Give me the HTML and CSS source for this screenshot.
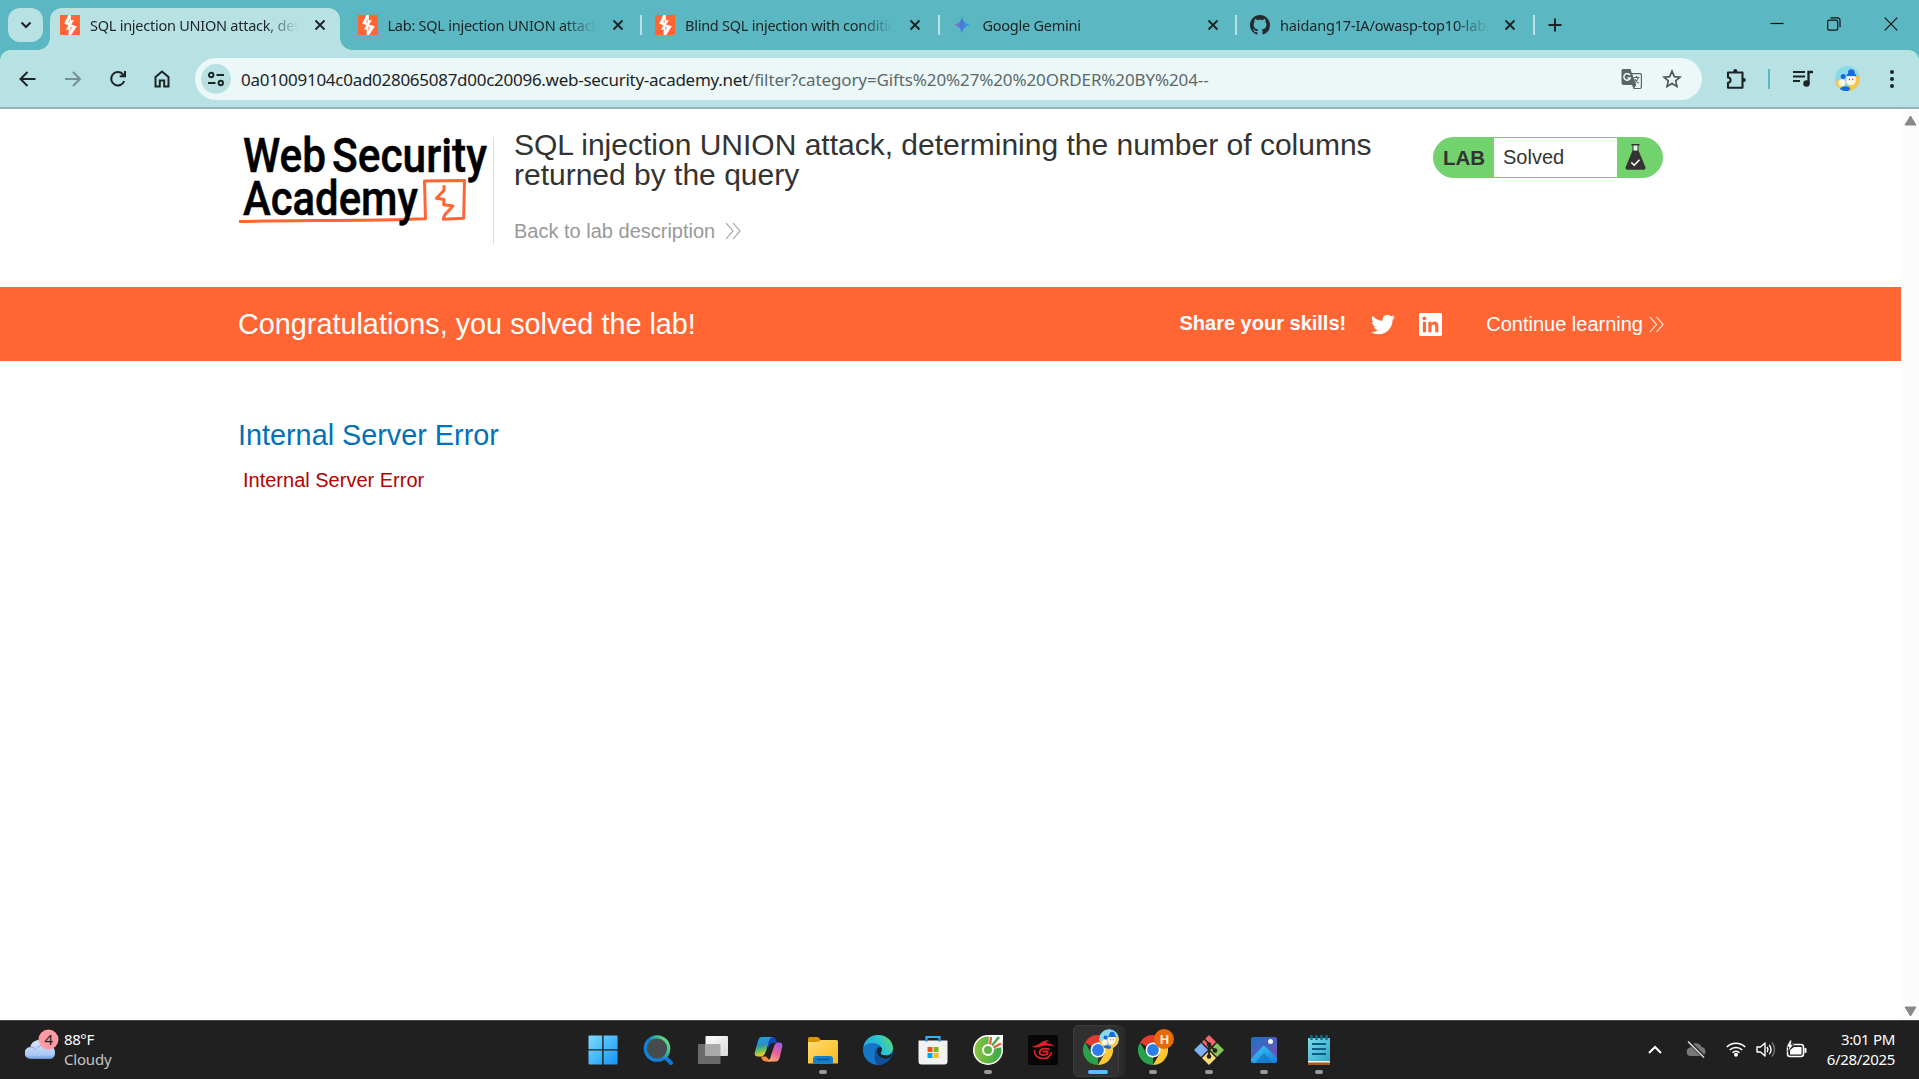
FILE: index.html
```html
<!DOCTYPE html>
<html lang="en">
<head>
<meta charset="utf-8">
<title>SQL injection UNION attack, determining the number of columns</title>
<link rel="stylesheet" href="styles.css">
</head>
<body>
<svg class="defs" aria-hidden="true">
  <defs>
    <symbol id="burp" viewBox="0 0 20 20"><path fill="#ff6633" d="M0 0h20v20H0z"/><path fill="#fff" d="M10.800 0v5.200h3.100L11 9.500l5.800 1.800L11.200 20H8.700v-5.600H5.800l2.700-4.200-4.300-1.500L8.300 0z"/><path fill="#ff6633" d="M7.800 7.200 10 3.500v4.400zM12.500 12.300 10 16.200v-4.600z" opacity=".5"/></symbol>
    <symbol id="x" viewBox="0 0 12 12"><path d="M1.500 1.500l9 9M10.500 1.500l-9 9" fill="none" stroke="#1c2426" stroke-width="1.900"/></symbol>
    <symbol id="chev" viewBox="0 0 16 18"><path d="M1 1l7 8-7 8M8 1l7 8-7 8" fill="none" stroke="currentColor" stroke-width="1.100"/></symbol>
    <symbol id="chrome" viewBox="0 0 30 30"><path fill="#e33b2e" d="M15 15 2 7.500A15 15 0 0 1 28 7.500z"/><path fill="#2aa14c" d="M15 15v15A15 15 0 0 1 2 7.500l6.500 11.200z"/><path fill="#fcc934" d="M15 7.500h13A15 15 0 0 1 15 30l6.500-11.200z"/><circle cx="15" cy="15" r="7.500" fill="#fff"/><circle cx="15" cy="15" r="5.900" fill="#2b7de9"/></symbol>
    <symbol id="avatar" viewBox="0 0 26 26"><circle cx="13" cy="13" r="13" fill="#8adbea"/><path fill="#f7c548" d="M.5 16 6 14l4 8 7-3 5-9 3.700.5C27 19 21 26 13 26 6 26 1 21 .5 16z"/><path fill="#fff6df" d="M12 12c1-4 9-4 9.500 0s-.5 8-5 8-5.500-4-4.500-8zM4 16c1-3 6-3 6.500 0s-.5 5-3.500 5-4-2-3-5z"/><circle cx="17" cy="7" r="3.500" fill="#1769e0"/><path fill="#1769e0" d="M12 8.500h10v2H12z"/><circle cx="8.500" cy="11" r="2.600" fill="#1769e0"/><path fill="#1769e0" d="M5 24c2-3.500 9-4 11-.5L14 26H9z"/><circle cx="15" cy="14" r=".7" fill="#553"/><circle cx="18.500" cy="14" r=".7" fill="#553"/></symbol>
  </defs>
</svg>

<header class="tabstrip">
  <button class="tabsearch"><svg width="12" height="8" viewBox="0 0 12 8"><path d="M1.500 1.500 6 6l4.500-4.500" fill="none" stroke="#1c2426" stroke-width="2.100"/></svg></button>
  <div class="tab active"><svg class="fav"><use href="#burp"/></svg><span class="label">SQL injection UNION attack, determining</span><svg class="close"><use href="#x"/></svg></div>
  <div class="tab"><svg class="fav"><use href="#burp"/></svg><span class="label">Lab: SQL injection UNION attack, determ</span><svg class="close"><use href="#x"/></svg></div>
  <div class="tab"><svg class="fav"><use href="#burp"/></svg><span class="label">Blind SQL injection with conditional resp</span><svg class="close"><use href="#x"/></svg></div>
  <div class="tab"><svg class="fav" viewBox="0 0 20 20"><defs><linearGradient id="gem"><stop offset="0" stop-color="#b56fc0"/><stop offset=".45" stop-color="#4a78d8"/><stop offset="1" stop-color="#22a5e8"/></linearGradient></defs><path fill="url(#gem)" d="M9 1c.7 5.500 3.500 8.300 9 9-5.500.7-8.300 3.500-9 9-.7-5.500-3.500-8.300-9-9 5.500-.7 8.300-3.500 9-9z"/></svg><span class="label">Google Gemini</span><svg class="close"><use href="#x"/></svg></div>
  <div class="tab"><svg class="fav" viewBox="0 0 16 16"><path fill="#24292f" d="M8 0C3.580 0 0 3.580 0 8c0 3.540 2.290 6.530 5.470 7.590.4.070.55-.17.55-.38 0-.19-.01-.82-.01-1.490-2.010.37-2.530-.49-2.690-.94-.09-.23-.48-.94-.82-1.130-.28-.15-.68-.52-.01-.53.63-.01 1.080.58 1.230.82.72 1.210 1.870.87 2.330.66.070-.52.280-.87.510-1.070-1.780-.2-3.640-.89-3.640-3.950 0-.87.310-1.590.820-2.150-.08-.2-.36-1.020.080-2.120 0 0 .67-.21 2.200.82.640-.18 1.320-.27 2-.27s1.360.09 2 .27c1.530-1.040 2.200-.82 2.200-.82.440 1.100.160 1.920.080 2.120.510.56.820 1.270.820 2.150 0 3.070-1.870 3.750-3.650 3.950.290.250.540.730.540 1.480 0 1.070-.01 1.930-.01 2.200 0 .21.150.46.550.38A8.010 8.010 0 0 0 16 8c0-4.420-3.580-8-8-8z"/></svg><span class="label tight">haidang17-IA/owasp-top10-labs: OWA</span><svg class="close"><use href="#x"/></svg></div>
  <svg class="newtab" viewBox="0 0 14 14"><path d="M7 .5v13M.5 7h13" stroke="#1c2426" stroke-width="2"/></svg>
  <div class="winctl">
    <svg width="14" height="14"><path d="M.5 6.500h13" stroke="#111" stroke-width="1.200"/></svg>
    <svg width="14" height="14" fill="none" stroke="#111" stroke-width="1.200"><rect x=".7" y="3.200" width="10" height="10" rx="1.500"/><path d="M3.500.8h7a2.500 2.500 0 0 1 2.500 2.500v7"/></svg>
    <svg width="14" height="14"><path d="M.7.7l12.600 12.600M13.300.7.7 13.300" stroke="#111" stroke-width="1.200"/></svg>
  </div>
</header>

<nav class="toolbar">
  <div class="navbtns">
    <svg viewBox="0 0 20 20"><path d="M17.500 10H3M9.500 3 2.500 10l7 7" class="ln"/></svg>
    <svg viewBox="0 0 20 20" opacity=".42"><path d="M2 10h14.500M10 3l7 7-7 7" class="ln"/></svg>
    <svg viewBox="0 0 20 20"><path d="M16.200 12a6.700 6.700 0 1 1-1.400-6.800l1.700 1.700M17 2v5.300h-5.300" class="ln"/></svg>
    <svg viewBox="0 0 20 20"><path d="M3.500 8 10 2.500 16.500 8v9.500h-4.300v-6H7.800v6H3.500z" class="ln"/></svg>
  </div>
  <div class="omnibox">
    <span class="site"><svg width="18" height="16" viewBox="0 0 18 16" fill="none" stroke="#1c2426" stroke-width="1.900"><circle cx="4.200" cy="4" r="2.200"/><path d="M9.500 4H17M1 12h7.500"/><circle cx="13.800" cy="12" r="2.200"/></svg></span>
    <span class="url"><b>0a01009104c0ad028065087d00c20096.web-security-academy.net</b><i>/filter?category=Gifts%20%27%20%20ORDER%20BY%204--</i></span>
    <svg class="translate" viewBox="0 0 22 22"><path fill="#5a6466" d="M2 1h7.500l1.300 4H19a2 2 0 0 1 2 2v12a2 2 0 0 1-2 2h-6.500L11 17H2.500a2 2 0 0 1-2-2V2.500A1.500 1.500 0 0 1 2 1z"/><path fill="#ecf8f8" d="M11.300 6.300H19a.8.8 0 0 1 .8.800v12a.8.8 0 0 1-.8.800h-5.700l2-2.900z"/><path d="M9 7.200A3.300 3.300 0 1 0 9.300 10H6.500" fill="none" stroke="#ecf8f8" stroke-width="1.500"/><path d="M12.500 9.500h6M15.500 8v1.500M17.300 9.500c-.5 2.500-2 4-3.600 5M13.700 11c.8 1.800 2.200 3.300 4 4.200" fill="none" stroke="#5a6466" stroke-width="1.200"/></svg>
    <svg class="star" viewBox="0 0 20 20"><path d="M10 2.200l2.300 5.400 5.700.5-4.300 3.800 1.300 5.700-5-3-5 3 1.300-5.700L2 8.100l5.700-.5z" fill="none" stroke="#4f595b" stroke-width="1.700"/></svg>
  </div>
  <div class="actions">
    <svg class="ext" width="24" height="24" viewBox="0 0 24 24"><path d="M3 5.500h14.500v15.200H3v-5a2.600 2.600 0 0 0 0-5.200z" fill="none" stroke="#1c2426" stroke-width="2.100" stroke-linejoin="round"/><path d="M8.300 5V4a2 2 0 0 1 4 0v1zM18 11h.8a2 2 0 0 1 0 4H18z" fill="#1c2426"/></svg>
    <span class="sep"></span>
    <svg class="media" width="22" height="18" viewBox="0 0 22 18"><path d="M1 2h12M1 6.500h12M1 11h7" stroke="#1c2426" stroke-width="2.100"/><path d="M16.500 13.500V2H21" fill="none" stroke="#1c2426" stroke-width="2.300"/><circle cx="14.500" cy="13.500" r="3.200" fill="#1c2426"/></svg>
    <svg class="me" width="25" height="25"><use href="#avatar"/></svg>
    <svg width="4" height="18" fill="#1c2426"><circle cx="2" cy="2" r="2"/><circle cx="2" cy="9" r="2"/><circle cx="2" cy="16" r="2"/></svg>
  </div>
</nav>

<div class="viewport">
  <main class="page">
    <section class="labhead">
      <svg class="logo" viewBox="0 0 255 95">
        <path d="M1 90.500c60-1.300 125-.5 186.500-2.800L186.500 50l40-.5-.8 37.800-20.500.9 1.500-4.200 8.200-9-9.200-1.200.3-5.300-7.500-1.200 7.500-8v-5" class="mark"/>
        <g class="logotext"><text x="5" y="41" textLength="83" lengthAdjust="spacingAndGlyphs">Web</text><text x="94" y="41" textLength="155" lengthAdjust="spacingAndGlyphs">Security</text><text x="5" y="84" textLength="175" lengthAdjust="spacingAndGlyphs">Academy</text></g>
      </svg>
      <div class="titles">
        <h2>SQL injection UNION attack, determining the number of columns returned by the query</h2>
        <a class="back"><span>Back to lab description</span><svg width="16" height="18"><use href="#chev"/></svg></a>
      </div>
      <div class="badge"><b>LAB</b><span>Solved</span><svg width="22" height="27" viewBox="0 0 22 27"><path fill="#333332" d="M6.500 0h8v1.500h-1v5l6.800 16.300c.7 1.700 0 2.900-1.700 2.900H2.500C.8 25.700.1 24.500.8 22.800L7.500 6.500v-5h-1z"/><path fill="#eef6ee" d="M8.500 1.500h4v5h-4z"/><path d="M6.300 18.500l2.900 2.700 5.300-5.400" fill="none" stroke="#fff" stroke-width="1.600"/></svg></div>
    </section>
    <section class="banner">
      <h4>Congratulations, you solved the lab!</h4>
      <b class="share">Share your skills!</b>
      <svg class="tw" viewBox="0 2 24 20"><path fill="#fff" d="M23.950 4.570a10 10 0 0 1-2.820.77 4.960 4.960 0 0 0 2.160-2.720c-.95.550-2 .95-3.130 1.180a4.920 4.920 0 0 0-8.380 4.480A13.900 13.900 0 0 1 1.640 3.160a4.920 4.920 0 0 0 1.520 6.570 4.900 4.900 0 0 1-2.230-.61v.06c0 2.380 1.700 4.370 3.950 4.820a5 5 0 0 1-2.210.090 4.940 4.940 0 0 0 4.600 3.420A9.870 9.870 0 0 1 0 19.540a14 14 0 0 0 7.550 2.210c9.050 0 14-7.500 14-13.980l-.02-.63a9.940 9.940 0 0 0 2.460-2.550z"/></svg>
      <svg class="li" viewBox="0 0 24 24"><rect width="24" height="24" rx="1.500" fill="#fff"/><path fill="#ff6633" d="M4 9.200h3.300V20H4zM9.800 9.200H13v1.500c1.700-2.800 7.200-2.400 7.200 2.600V20H17v-5.800c0-3.200-3.900-3-3.900 0V20H9.800z"/><circle cx="5.600" cy="5.600" r="2" fill="#ff6633"/></svg>
      <a class="cont"><span>Continue learning</span><svg width="15" height="17"><use href="#chev"/></svg></a>
    </section>
    <section class="error"><h4>Internal Server Error</h4><p>Internal Server Error</p></section>
  </main>
  <div class="scroll"><svg width="13" height="11"><path d="M6.500 1 12 10H1z" fill="#888" stroke="#888" stroke-linejoin="round"/></svg><svg width="13" height="11"><path d="M6.500 10 1 1h11z" fill="#888" stroke="#888" stroke-linejoin="round"/></svg></div>
</div>

<footer class="taskbar">
  <div class="weather">
    <svg width="36" height="36" viewBox="0 0 36 36"><defs><linearGradient id="cl" x2="0" y2="1"><stop stop-color="#dce9fb"/><stop offset=".8" stop-color="#a8c6f5"/><stop offset="1" stop-color="#6c94d8"/></linearGradient></defs><path fill="url(#cl)" d="M6 30a6 6 0 0 1-.8-12A9 9 0 0 1 21 14.500c6 0 9 5 9 9s-2 6.500-5 6.500z"/><path d="M5 18.500c3-.5 5 .5 6.500 2.500M12 19c4-4 9-4 13 1" stroke="#8eaee0" fill="none"/><circle cx="23.500" cy="10.500" r="10" fill="#ff99a4"/><text x="23.500" y="16" class="count">4</text></svg>
    <div class="wtext"><div class="deg">88°F</div><div class="cond">Cloudy</div></div>
  </div>
  <div class="apps">
    <span><svg viewBox="0 0 30 30"><defs><linearGradient id="wn" x2="1" y2="1"><stop stop-color="#7fdcff"/><stop offset="1" stop-color="#0f94f5"/></linearGradient></defs><path fill="url(#wn)" d="M.5 1.500a1 1 0 0 1 1-1h12.700v13.700H.5zM15.600.5h13a1 1 0 0 1 1 1v12.700h-14zM.5 15.500h13.700v14H1.500a1 1 0 0 1-1-1zM15.600 15.500h14v13a1 1 0 0 1-1 1h-13z"/></svg></span>
    <span><svg viewBox="0 0 30 30"><defs><linearGradient id="sr" x1="1" x2="0" y2=".7"><stop stop-color="#6df08a"/><stop offset=".35" stop-color="#41b88e"/><stop offset=".6" stop-color="#147fd2"/><stop offset="1" stop-color="#1183dc"/></linearGradient></defs><path d="M21 21l7 7" stroke="#0d78d4" stroke-width="4" stroke-linecap="round"/><circle cx="14" cy="13.500" r="11.700" fill="#474b4c" stroke="url(#sr)" stroke-width="3.200"/></svg></span>
    <span><svg viewBox="0 0 30 30"><defs><linearGradient id="tv" x2="1" y2="1"><stop stop-color="#fff"/><stop offset="1" stop-color="#d8d8d8"/></linearGradient></defs><rect y="9" width="22.500" height="20" rx="1" fill="#6a6a6a"/><rect x="7.500" y="1" width="22.500" height="20" rx="1" fill="url(#tv)"/><path fill="#aaa" d="M7.500 9h15v12h-15z"/></svg></span>
    <span><svg viewBox="0 0 30 30"><defs><linearGradient id="c1" x2=".2" y2="1"><stop stop-color="#1ba7ee"/><stop offset=".45" stop-color="#2b8ec2"/><stop offset=".7" stop-color="#63bb62"/><stop offset="1" stop-color="#f2cf25"/></linearGradient><linearGradient id="c2" x1=".8" x2=".3" y2="1"><stop stop-color="#a45be6"/><stop offset=".5" stop-color="#e75f9d"/><stop offset="1" stop-color="#ffaa68"/></linearGradient></defs><g transform="translate(1)"><path fill="#1545bd" d="M14 2h4c3 0 4 2 5 6h-4c-3 0-4 3-5 6z"/><path fill="url(#c1)" d="M8 2h11c-3 0-4 3-5 8l-2 6c-1 4-3 5.500-6 5.500H4c-3 0-4-2-3-5L4 6c1-3 2-4 4-4z"/><path fill="#f58a3c" d="M7 21.500h5l5 5H12c-3 0-4-2-5-5z"/><path fill="url(#c2)" d="M22 26.500H12c3 0 4-2 5-6l3-9c1-3 2-4 5-4 3 0 4 2 3 5l-2 9c-1 3.500-2 5-4 5z"/></g></svg></span>
    <span class="run"><svg viewBox="0 0 30 30"><path fill="#dc9400" d="M0 3.500A1.500 1.500 0 0 1 1.500 2H10l3.500 3.500V12H0z"/><defs><linearGradient id="fe" x2="1" y2="1"><stop stop-color="#ffdc78"/><stop offset="1" stop-color="#fcb813"/></linearGradient></defs><path fill="url(#fe)" d="M0 7h10l3-2h15.500A1.500 1.500 0 0 1 30 6.500v22H0z"/><path fill="#1180d0" d="M5 28.500V24a3 3 0 0 1 3-3h14a3 3 0 0 1 3 3v4.500z"/><path d="M9 24.500h12" stroke="#0b4e92" stroke-width="1.500"/></svg></span>
    <span><svg viewBox="0 0 30 30"><defs><linearGradient id="e1" y1=".4" x2="1"><stop stop-color="#2aa5e0"/><stop offset=".5" stop-color="#2cc3d3"/><stop offset="1" stop-color="#6be04c"/></linearGradient></defs><circle cx="15" cy="15" r="15" fill="#0c59a4"/><path fill="#1676c8" d="M0 14c1-6 6-7 11-6 3 1 5 2 6 4-4-1-6 3-5 7 1 5 4 8 9 9.500C10 33 0 25 0 14z"/><path fill="url(#e1)" d="M.3 12C2 4 8 0 15 0c9 0 15 6.500 15 13 0 5-4 7.500-7.500 7.500-3 0-5-1-5-2 0-.8 1.500-1.300 1.500-4C19 9 7 4.500.3 12z"/><path fill="#202020" d="M18.700 13c.5 2.800-1.200 4-1.200 5 0 1.200 2.200 2.500 5.500 2.500 2 0 3.500-.5 5-1.500l1 1c-2 4-6 4.500-9 3.500-4-1.200-6-4-6-7s2-5 4.700-3.500z"/><path fill="#0f4f98" d="M13.500 15c.3 4 3 7.300 7.500 8.500 3 .5 6-.5 7.500-2C26 27 20 30 15 30c-4-3-4-11-1.500-15z"/></svg></span>
    <span><svg viewBox="0 0 30 30"><path d="M8.500 7V2h13v5" fill="none" stroke="#2fb3f3" stroke-width="2.200"/><path fill="#f2f2f2" d="M.5 5.500h29v21a3 3 0 0 1-3 3h-23a3 3 0 0 1-3-3z"/><path d="M8.500 6.500V4M21.500 6.500V4" stroke="#1381c4" stroke-width="2.200"/><path fill="#f25022" d="M9.500 12h5v5h-5z"/><path fill="#7fba00" d="M15.500 12h5v5h-5z"/><path fill="#00a4ef" d="M9.500 18h5v5h-5z"/><path fill="#ffb900" d="M15.500 18h5v5h-5z"/></svg></span>
    <span class="run"><svg viewBox="0 0 30 30"><defs><linearGradient id="cc" x2="1"><stop stop-color="#8bc53f"/><stop offset="1" stop-color="#39a84a"/></linearGradient></defs><circle cx="15" cy="15" r="15" fill="#fff"/><path fill="#fff" d="M15 0h15l-1 15z"/><circle cx="15" cy="15" r="13.500" fill="url(#cc)"/><path fill="#fff" d="M15 15 16 0h14l-.5 12z"/><path d="M17 10 18 2M20.500 12.500l7.500-4" stroke="#f15a38" stroke-width="2.400"/><path d="M19 10.500 26 2" stroke="#45a849" stroke-width="2.400"/><circle cx="15" cy="15" r="6" fill="#fff"/><circle cx="15" cy="15" r="4" fill="#62b445"/></svg></span>
    <span><svg viewBox="0 0 30 30"><rect width="30" height="30" rx="2" fill="#070606"/><path fill="#e3202a" d="M3.500 11C8 12 10 9 14 7c2-1 4-2 7-2-2 1-3 2-2.500 3 3 .3 6 1.500 8.500 3.500-5-1-10-1.500-14 0C9 13 5 13 3.500 11z"/><path d="M22 14.500c-5-2-10-.5-10.500 2.500s4 4 8 2v-2.500h-5" fill="none" stroke="#e3202a" stroke-width="1.800"/><path d="M6.500 15c-.5 5 3 8.500 8.500 8.500 4.500 0 7.500-2.500 8.500-6.500" fill="none" stroke="#e3202a" stroke-width="1.500"/></svg></span>
    <span class="run current"><svg viewBox="0 0 30 30"><use href="#chrome"/></svg><svg class="pip"><use href="#avatar"/></svg></span>
    <span class="run"><svg viewBox="0 0 30 30"><use href="#chrome"/></svg><em class="pip">H</em></span>
    <span class="run"><svg viewBox="0 0 30 30"><path fill="#f0686c" d="m15 0 7 7-7 7-7-7z"/><path fill="#7fb0f6" d="m7 8 7 7-7 7-7-7z"/><path fill="#84c452" d="m23 8 7 7-7 7-7-7z"/><path fill="#fbdc7c" d="m15 16 7 7-7 7-7-7z"/><path d="m9.500 3 5.500 6v13M15 9.500l6 6" fill="none" stroke="#262020" stroke-width="1.800"/><circle cx="15" cy="9.500" r="2.300" fill="#262020"/><circle cx="21" cy="15.500" r="2.300" fill="#262020"/><circle cx="15" cy="21.500" r="2.300" fill="#262020"/></svg></span>
    <span class="run"><svg viewBox="0 0 30 30"><defs><linearGradient id="ph" x2=".7" y2="1"><stop stop-color="#1b72c8"/><stop offset="1" stop-color="#7652b6"/></linearGradient><linearGradient id="mt" x2="1" y2="1"><stop stop-color="#3cc8f6"/><stop offset="1" stop-color="#1280dc"/></linearGradient></defs><rect x="2" y="2" width="26" height="26" rx="2.500" fill="url(#ph)"/><path fill="url(#mt)" d="M2 24 13 12q2-2 4 0l11 11v2.500a2.500 2.500 0 0 1-2.500 2.500h-21A2.500 2.500 0 0 1 2 25.500z"/><path fill="#0d6cc9" d="m15 18 9 10H6z" opacity=".6"/><circle cx="21.500" cy="6.500" r="2.500" fill="#f2f4ff"/></svg></span>
    <span class="run"><svg viewBox="0 0 30 30"><defs><linearGradient id="np" x2="1" y2="1"><stop stop-color="#7fdcec"/><stop offset="1" stop-color="#2fa5c8"/></linearGradient></defs><path fill="#a95a16" d="M4 25h22v5H4z"/><path fill="#f3f3f3" d="M4 24h22v3.500H4z"/><path fill="url(#np)" d="M4 3h22v23H4z"/><path d="M8 9h14M8 14h14M8 19h14" stroke="#0b5f80" stroke-width="1.800"/><path d="M7.500 1v3M12.500 1v3M17.500 1v3M22.500 1v3" stroke="#0d6d8c" stroke-width="2.600" stroke-linecap="round"/></svg></span>
  </div>
  <div class="tray">
    <svg width="14" height="9"><path d="M1 8l6-6 6 6" fill="none" stroke="#fff" stroke-width="2"/></svg>
    <svg width="20" height="17" viewBox="0 0 20 17"><path fill="#777" d="M4.500 15a4.300 4.300 0 0 1-.3-8.500A6 6 0 0 1 15.500 6 4.600 4.600 0 0 1 16 15z"/><path d="M2.500.5l16 16" stroke="#222" stroke-width="3.500"/><path d="M2 .5l16 16" stroke="#ddd" stroke-width="1.500"/></svg>
    <svg width="20" height="16" viewBox="0 0 20 16" fill="none" stroke="#fff" stroke-width="1.600"><path d="M.8 6a13 13 0 0 1 18.400 0M3.700 9a9 9 0 0 1 12.600 0M6.500 11.800a5 5 0 0 1 7 0"/><circle cx="10" cy="13.800" r="1.200" fill="#fff"/></svg>
    <svg width="20" height="17" viewBox="0 0 20 17" fill="none" stroke="#fff" stroke-width="1.400"><path d="M1 6h3.500L9 2v13l-4.500-4H1z" stroke-linejoin="round"/><path d="M11 6q1.800 2.500 0 5M13.300 3.800q3.400 4.700 0 9.400"/><path d="M16 1.500q5 7 0 14" stroke="#777"/></svg>
    <svg width="21" height="18" viewBox="0 0 21 18"><rect x="1.500" y="4.500" width="16" height="12" rx="2.500" fill="none" stroke="#fff" stroke-width="1.500"/><path fill="#fff" d="M4 10l4-3h7.500v7.500H4zM18.500 8h1a1 1 0 0 1 1 1v3a1 1 0 0 1-1 1h-1z"/><path fill="#fff" stroke="#202020" stroke-width=".8" d="M4 0 .3 7H3l-1 5 5.500-7.500H5L6 0z"/></svg>
    <div class="clock"><div class="time">3:01 PM</div><div class="date">6/28/2025</div></div>
  </div>
</footer>
</body>
</html>
```
FILE: styles.css
```css
* { box-sizing: border-box; }
body {
  margin: 0;
  width: 1919px;
  height: 1079px;
  display: flex;
  flex-direction: column;
  overflow: hidden;
  background: #fff;
  font-family: "Liberation Sans", Arial, sans-serif;
}
svg { display: block; flex: none; }
h2, h4, p { margin: 0; font-weight: 400; }
.defs { position: absolute; width: 0; height: 0; }

/* Tab strip */
.tabstrip {
  height: 50px;
  flex: none;
  display: flex;
  background: #5bb7c1;
  padding: 8px 0 0 8px;
  font-family: "Noto Sans", sans-serif;
  font-size: 14.5px;
  letter-spacing: -0.25px;
  color: #1c2426;
}
.tabsearch {
  width: 35px;
  height: 34px;
  padding: 0;
  border: 0;
  border-radius: 12px;
  background: #b8e1e4;
  display: grid;
  place-items: center;
  margin-right: 7px;
}
.tab {
  width: 297.5px;
  height: 42px;
  display: flex;
  align-items: center;
  padding: 0 15px 8px 10px;
  position: relative;
}
.fav { width: 20px; height: 20px; }
.label {
  width: 210px;
  margin: 0 14px 0 10px;
  overflow: hidden;
  white-space: nowrap;
  mask-image: linear-gradient(90deg, #000 175px, transparent 208px);
}
.label.tight { letter-spacing: -0.15px; }
.close { width: 12px; height: 12px; }
.tab:not(.active)::after {
  content: "";
  position: absolute;
  right: 3px;
  top: 7px;
  width: 2px;
  height: 20px;
  background: #b8e1e4;
}
.tab.active::before {
  content: "";
  position: absolute;
  inset: 0 8px 0 0;
  border-radius: 12px 12px 0 0;
  background: #b8e1e4;
}
.tab.active::after {
  content: "";
  position: absolute;
  left: -12px;
  right: -4px;
  bottom: 0;
  height: 12px;
  background:
    radial-gradient(circle at 0 0, transparent 11.5px, #b8e1e4 12px) left / 12px 12px no-repeat,
    radial-gradient(circle at 100% 0, transparent 11.5px, #b8e1e4 12px) right / 12px 12px no-repeat;
}
.tab.active > * { position: relative; z-index: 1; }
.newtab { width: 14px; height: 14px; margin: 10px 0 0 10.500px; }
.winctl { margin-left: auto; display: flex; gap: 43px; padding: 9px 21px 0 0; }

/* Toolbar */
.toolbar {
  height: 59px;
  flex: none;
  display: flex;
  align-items: center;
  background:
    radial-gradient(circle at 100% 100%, #b8e1e4 9.500px, #5bb7c1 10px) left top / 10px 10px no-repeat,
    radial-gradient(circle at 0 100%, #b8e1e4 9.500px, #5bb7c1 10px) right top / 10px 10px no-repeat,
    #b8e1e4;
  border-bottom: 2px solid #93b5b8;
  padding-left: 18px;
}
.navbtns { display: flex; gap: 24.800px; width: 177px; }
.navbtns svg { width: 20px; height: 20px; }
.ln { fill: none; stroke: #1c2426; stroke-width: 2; }
.omnibox {
  width: 1507px;
  height: 42px;
  border-radius: 21px;
  background: #ecf8f8;
  display: flex;
  align-items: center;
  padding: 0 20px 0 6px;
}
.site { width: 30px; height: 30px; border-radius: 50%; background: #b8e1e4; display: grid; place-items: center; }
.url {
  flex: 1;
  margin: 1px 0 0 10px;
  font: 17px "Noto Sans", sans-serif;
  letter-spacing: -0.275px;
  white-space: nowrap;
  color: #5c686b;
}
.url b { font-weight: 400; color: #1c2426; }
.url i { font-style: normal; letter-spacing: -0.120px; }
.translate { width: 22px; height: 22px; margin-right: 19px; }
.star { width: 20px; height: 20px; }
.actions { display: flex; align-items: center; flex: 1; padding-left: 23px; }
.sep { width: 2px; height: 20px; background: #5bb7c1; margin-left: 18.500px; }
.media { margin-left: 22.500px; }
.me { margin: 0 29.500px 0 21px; }

/* Page */
.viewport { flex: 1; display: flex; min-height: 0; }
.page { flex: 1; }
.scroll { width: 18px; background: #fcfcfc; display: flex; flex-direction: column; justify-content: space-between; align-items: center; padding: 6px 0 3px; }
.labhead { height: 178px; display: flex; align-items: flex-start; padding: 28px 238px 0 238px; }
.logo { width: 255px; height: 95px; margin-top: -6px; }
.logotext { font-family: Roboto, sans-serif; font-weight: 500; font-size: 49px; stroke: #000; stroke-width: .5px; }
.mark { fill: none; stroke: #ff6633; stroke-width: 3; stroke-linejoin: round; }
.titles { width: 920px; height: 107px; border-left: 1px solid #ddd; padding-left: 20px; flex: none; }
.titles h2 { font-size: 30px; line-height: 30px; color: #333332; margin-top: -7px; width: 880px; }
.back { display: flex; align-items: center; gap: 10px; font-size: 20px; line-height: 24px; color: #999; margin-top: 29px; }
.badge {
  margin-left: 20px;
  width: 230px;
  height: 41px;
  flex: none;
  border: 1px solid #72d26e;
  border-radius: 20.500px;
  background: #72d26e;
  display: flex;
  align-items: center;
  color: #333332;
  font-size: 20px;
  overflow: hidden;
}
.badge b { width: 60px; padding-left: 9px; font-size: 20.500px; }
.badge span { width: 123px; height: 39px; line-height: 38px; background: #fff; padding-left: 9px; }
.badge svg { margin-left: 7.500px; }
.banner { height: 74px; background: #ff6633; color: #fff; display: flex; align-items: center; padding: 0 237px 0 238px; }
.banner h4 { font-size: 28.800px; flex: 1; }
.share { font-size: 20px; margin-top: -1px; }
.tw { width: 24px; height: 21px; margin-left: 25px; }
.li { width: 23px; height: 23px; margin-left: 24px; }
.cont { display: flex; align-items: center; gap: 6px; margin-left: 44px; font-size: 20px; }
.error { padding: 56px 238px 0; }
.error h4 { font-size: 28.800px; line-height: 36px; color: #0071bc; }
.error p { font-size: 20px; line-height: 24px; color: #b50000; padding: 15px 0 0 5px; }

/* Taskbar */
.taskbar {
  height: 59px;
  flex: none;
  display: flex;
  align-items: center;
  background: #202020;
  border-top: 1px solid #454848;
  font: 15px/20px "Noto Sans", sans-serif;
  color: #fff;
}
.weather { width: 575px; padding: 0 0 3px 25px; display: flex; align-items: center; gap: 3px; letter-spacing: -0.400px; }
.weather .cond { color: #c4c4c4; letter-spacing: -0.200px; }
.weather svg { margin-top: -3px; }
.count { font: 15px "Noto Sans", sans-serif; text-anchor: middle; fill: #222; }
.apps { display: flex; }
.apps span { width: 55.100px; height: 58px; display: grid; place-items: center; position: relative; }
.apps span > svg:first-child { width: 30px; height: 30px; position: relative; }
.run::after { content: ""; position: absolute; bottom: 5px; left: 23.500px; width: 8px; height: 4px; border-radius: 2px; background: #999; }
.current::after { left: 17.500px; width: 20px; background: #4cc2ff; }
.current::before {
  content: "";
  position: absolute;
  left: 2.500px;
  top: 4px;
  width: 44px;
  height: 50px;
  border-radius: 5px;
  background: #303030;
  border: 1px solid #3c3c3c;
  box-shadow: 6px 0 0 #2a2a2a;
}
.pip { position: absolute; left: 28.500px; top: 8px; width: 20px; height: 20px; border-radius: 50%; }
em.pip { background: #e8690b; color: #ffe7d0; font: 700 13px/20px "Noto Sans", sans-serif; text-align: center; }
.tray { margin-left: auto; display: flex; align-items: center; padding: 0 24px 2px 0; }
.tray > svg + svg { margin-left: 20px; }
.tray > svg:nth-child(1) { margin-right: 4px; }
.tray > svg:nth-child(4), .tray > svg:nth-child(5) { margin-left: 10px; }
.clock { width: 88px; text-align: right; letter-spacing: -0.320px; }
```
